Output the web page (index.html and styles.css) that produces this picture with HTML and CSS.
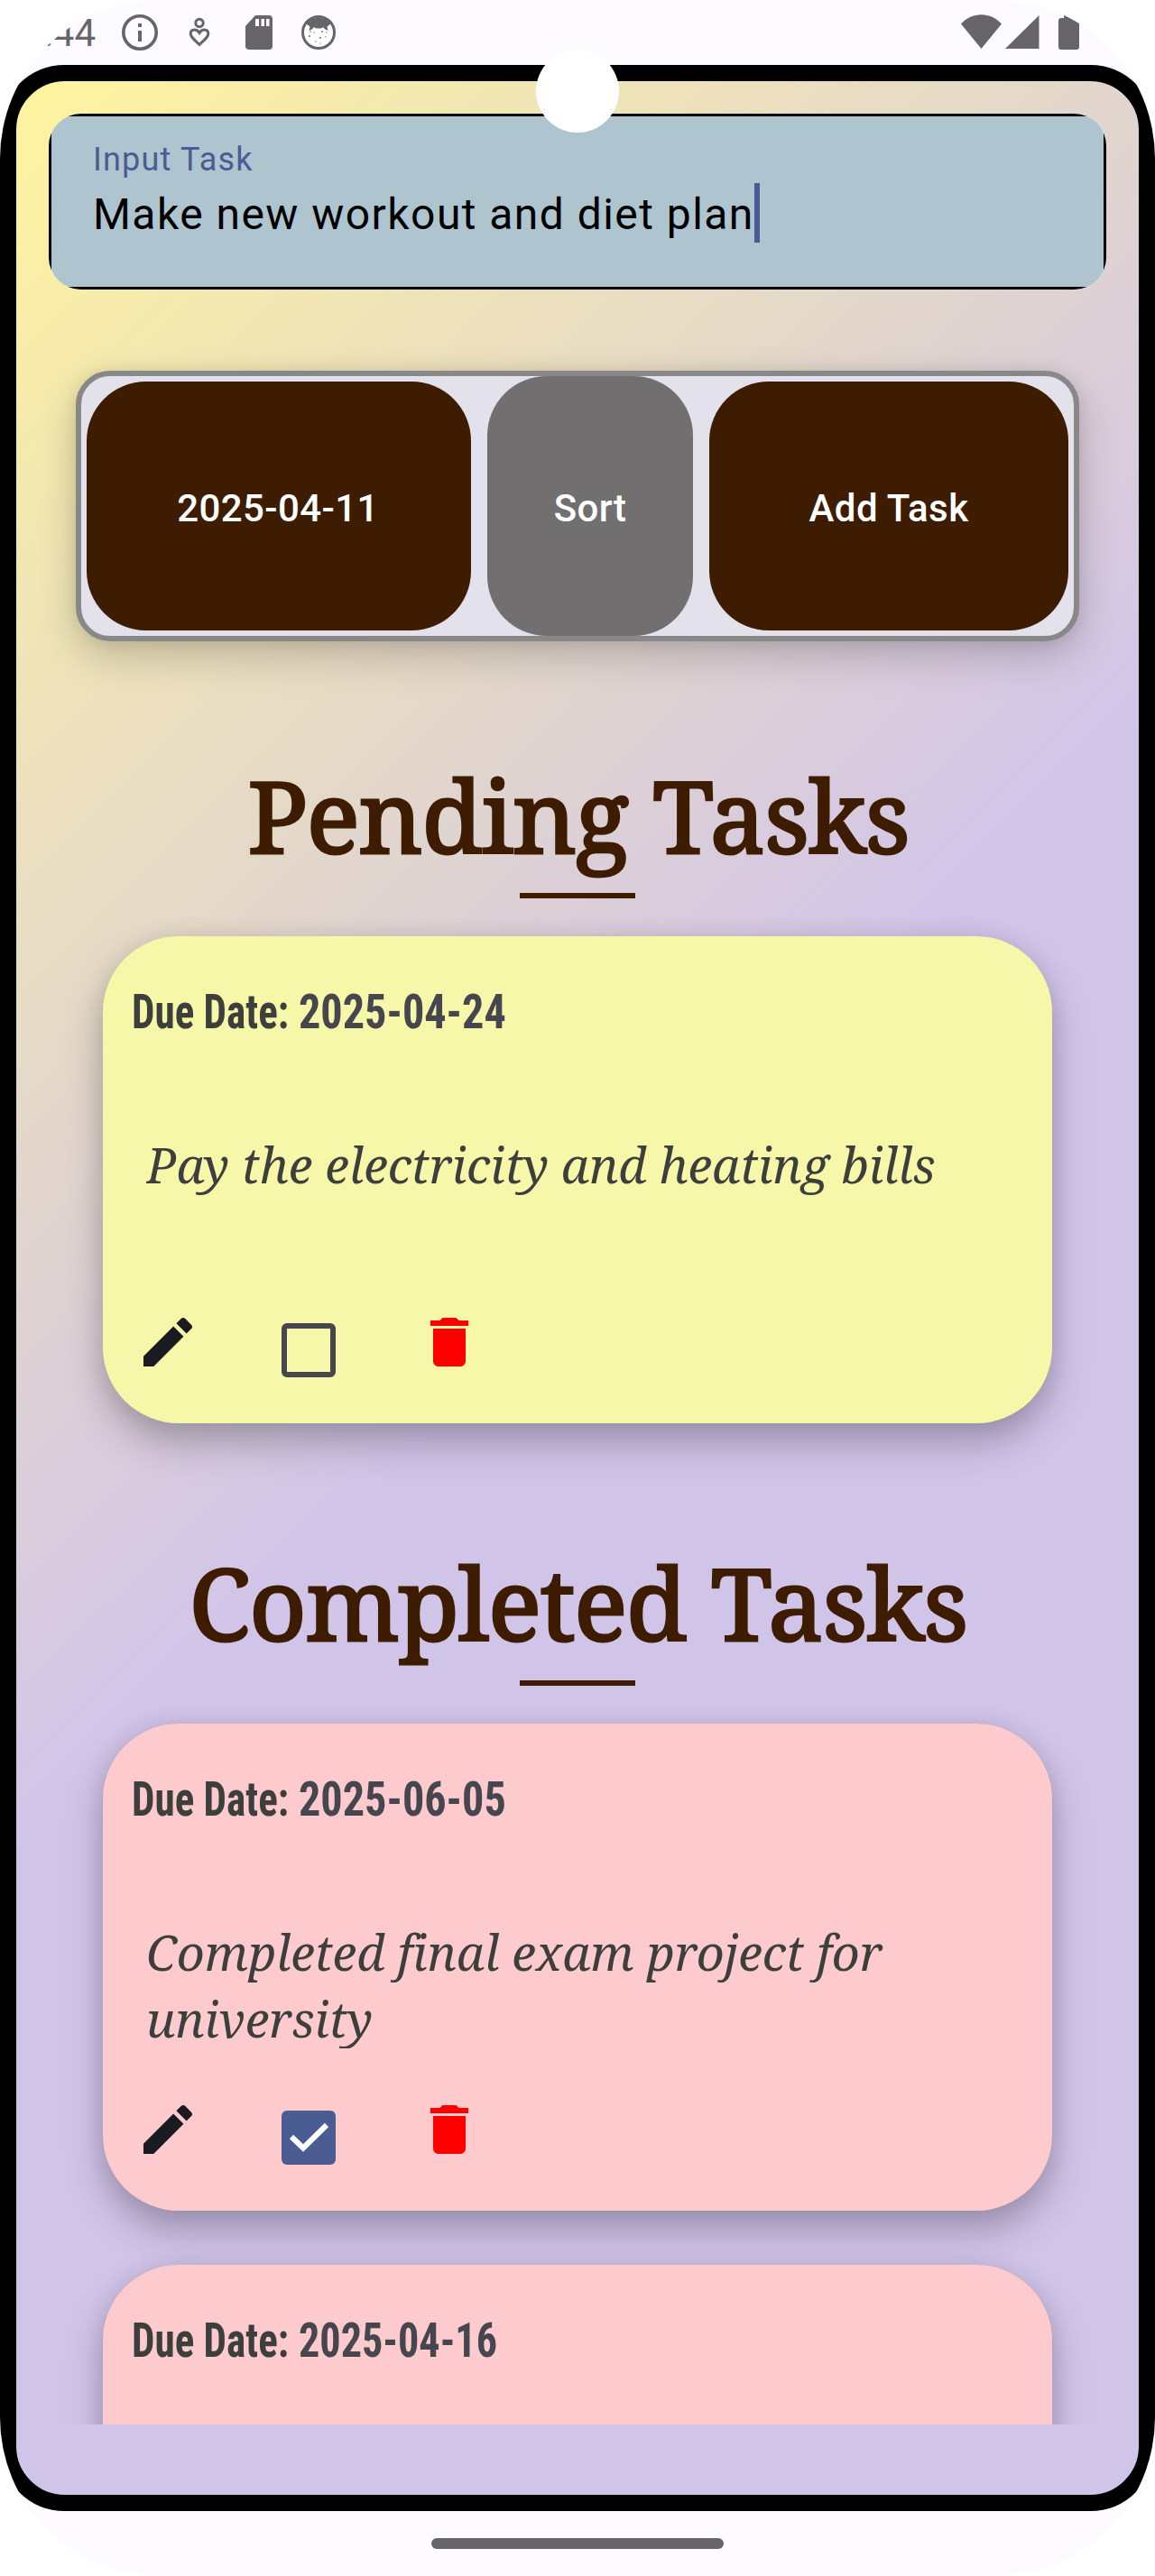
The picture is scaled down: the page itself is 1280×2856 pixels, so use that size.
FILE: index.html
```html
<!DOCTYPE html>
<html lang="en">
<head>
<meta charset="utf-8">
<title>Tasks</title>
<link rel="stylesheet" href="styles.css">
</head>
<body>
<svg class="sprite" aria-hidden="true">
  <symbol id="edit" viewBox="0 0 24 24"><path d="M3 17.25V21h3.75L17.81 9.94l-3.75-3.75L3 17.25zM20.71 7.04c.39-.39.39-1.02 0-1.41l-2.34-2.34c-.39-.39-1.02-.39-1.41 0l-1.83 1.83 3.75 3.75 1.83-1.83z"/></symbol>
  <symbol id="delete" viewBox="0 0 24 24"><path d="M6 19c0 1.1.9 2 2 2h8c1.1 0 2-.9 2-2V7H6v12zM19 4h-3.500l-1-1h-5l-1 1H5v2h14V4z"/></symbol>
</svg>
<div class="screen">
  <header class="status">
    <span class="clock">:44</span>
    <svg class="ic-info" viewBox="0 0 40 40"><circle cx="20" cy="20" r="18.200" fill="none" stroke="currentColor" stroke-width="3.600"/><path d="M18 10h4v4h-4zM18 18h4v12h-4z"/></svg>
    <svg class="ic-care" viewBox="0 0 24 34"><g fill="none" stroke="currentColor" stroke-width="3"><circle cx="12" cy="6.500" r="4.200"/><path d="M12 30.500C5 24 2.200 21.500 2.200 18.500c0-3 2-4.500 4.400-4.500 2.200 0 3.900 1 5.400 3.400 1.500-2.400 3.200-3.400 5.400-3.400 2.400 0 4.400 1.500 4.400 4.500 0 3-2.800 5.500-9.800 12z"/></g></svg>
    <svg class="ic-sd" viewBox="0 0 30 38"><path fill-rule="evenodd" d="M11 0h15a4 4 0 0 1 4 4v30a4 4 0 0 1-4 4H4a4 4 0 0 1-4-4V12zM11 4v8h4V4zM17.500 4v8h3.500V4zM23 4v8h3.500V4z"/></svg>
    <svg class="ic-face" viewBox="0 0 38 38"><circle cx="19" cy="19" r="17.500" fill="#fff" stroke="currentColor" stroke-width="3"/><path d="M5 9C10 1 28 1 33 9l-4.500 3.500 1 4.500-4-2-1-2c-3 2-8 2-11 0l-1 2-4 2 1-4.500z"/><g><circle cx="9" cy="23" r="1"/><circle cx="14" cy="19" r=".7"/><circle cx="21" cy="25" r="1"/><circle cx="27" cy="24" r=".7"/><circle cx="23" cy="18" r=".9"/><circle cx="16" cy="29" r=".7"/><circle cx="28" cy="19" r=".7"/><circle cx="10" cy="18" r=".8"/><circle cx="21" cy="31" r=".6"/></g></svg>
    <svg class="ic-net" viewBox="0 0 131 40"><path d="M0 10.500C12-3.300 33-3.300 45 10.500L22.500 38zM49 38 86.500 1v37zM108 7a3 3 0 0 1 3-3h3V1h10v3h4a3 3 0 0 1 3 3v29a3 3 0 0 1-3 3h-17a3 3 0 0 1-3-3z"/></svg>
  </header>
  <main class="app">
    <div class="field">
      <div class="field-inner">
        <label class="field-label">Input Task</label>
        <div class="field-value">Make new workout and diet plan<i class="caret"></i></div>
      </div>
    </div>
    <div class="actions">
      <button class="btn btn-date">2025-04-11</button>
      <button class="btn btn-sort">Sort</button>
      <button class="btn btn-add">Add Task</button>
    </div>
    <div class="lists">
      <h2 class="title">Pending Tasks</h2>
      <article class="card pending">
        <div class="due"><span class="due-label">Due Date:</span><span class="due-date">2025-04-24</span></div>
        <p class="desc">Pay the electricity and heating bills</p>
        <div class="tools"><svg class="edit"><use href="#edit"/></svg><span class="check"></span><svg class="delete"><use href="#delete"/></svg></div>
      </article>
      <h2 class="title">Completed Tasks</h2>
      <article class="card done">
        <div class="due"><span class="due-label">Due Date:</span><span class="due-date">2025-06-05</span></div>
        <p class="desc">Completed final exam project for university</p>
        <div class="tools"><svg class="edit"><use href="#edit"/></svg><span class="check checked"><svg viewBox="0 0 60 60"><path d="M11 29l13 12.500L50 16"/></svg></span><svg class="delete"><use href="#delete"/></svg></div>
      </article>
      <article class="card done">
        <div class="due"><span class="due-label">Due Date:</span><span class="due-date narrow">2025-04-16</span></div>
      </article>
    </div>
  </main>
  <footer class="nav"><span class="pill"></span></footer>
  <span class="camera"></span>
</div>
</body>
</html>
```
FILE: styles.css
```css
* { box-sizing: border-box; }
body { margin: 0; background: #fff; font-family: Roboto, sans-serif; }
.sprite { display: none; }
.screen {
  position: relative;
  width: 1280px;
  height: 2856px;
  border-radius: 176px;
  overflow: hidden;
  background: #fdfbff;
  display: flex;
  flex-direction: column;
}

/* system bar */
.status {
  height: 72px;
  flex: none;
  display: flex;
  align-items: flex-start;
  padding: 16px 84px 0 47px;
  color: #67646a;
}
.status svg { fill: currentColor; flex: none; }
.clock { width: 59px; margin-right: 29px; font-size: 42px; line-height: 42px; text-align: right; }
.ic-info { width: 40px; height: 40px; }
.ic-care { width: 24px; height: 34px; margin: 3px 0 0 34px; }
.ic-sd { width: 30px; height: 38px; margin: 1px 0 0 39px; }
.ic-face { width: 38px; height: 38px; margin: 1px 0 0 32px; }
.ic-net { width: 131px; height: 40px; margin-left: auto; }

.app {
  height: 2712px;
  flex: none;
  border: 18px solid #000;
  border-radius: 72px;
  padding: 36px 36px 78px;
  background: linear-gradient(135deg, #fff59d 0, #d1c4e9 1414px) border-box;
  display: flex;
  flex-direction: column;
}

/* text field */
.field { height: 195px; flex: none; border-radius: 36px; overflow: hidden; background: #aec5cf; }
.field-inner { height: 195px; border: 3px solid #000; padding: 24px 46px 0; }
.field-label { display: block; font-size: 36px; line-height: 48px; letter-spacing: 1.2px; color: #4a5c92; }
.field-value { display: flex; height: 66px; margin-top: 2px; font-size: 48px; line-height: 69px; letter-spacing: 1.45px; color: #000; white-space: nowrap; }
.caret { width: 6px; height: 66px; background: #4a5c92; }

/* buttons */
.actions {
  height: 300px;
  flex: none;
  margin: 90px 30px 0;
  padding: 0 6px;
  border: 6px solid #888;
  border-radius: 38px;
  background: #e2e1ec;
  display: flex;
  align-items: center;
  gap: 18px;
  box-shadow: 0 16px 44px rgba(0, 0, 0, .2), 0 0 16px rgba(0, 0, 0, .08);
}
.btn {
  height: 276px;
  padding: 5px 0 0;
  border: 0;
  border-radius: 66px;
  background: #3d1c02;
  color: #fff;
  font: 500 42px/60px Roboto, sans-serif;
  letter-spacing: .4px;
}
.btn-date { width: 426px; padding-right: 2px; }
.btn-sort { width: 228px; height: 288px; background: #716f70; }
.btn-add { width: 398px; }

/* scrolling lists */
.lists { flex: 1; margin: 0 -36px; padding: 0 96px; overflow: hidden; }
.title {
  position: relative;
  margin: 114px -60px 0;
  height: 213px;
  padding-left: 2px;
  font: 400 110px/156px "Noto Serif", "DejaVu Serif Condensed", serif;
  -webkit-text-stroke: 3px #3d1c02;
  letter-spacing: -1.1px;
  text-align: center;
  color: #3d1c02;
}
.card + .title { margin-top: 120px; }
.title::after {
  content: "";
  position: absolute;
  left: 50%;
  bottom: 42px;
  width: 128px;
  height: 6px;
  margin-left: -64px;
  background: #3d1c02;
}
.card {
  height: 540px;
  border-radius: 84px;
  padding: 48px 48px 0 32px;
  box-shadow: 0 22px 42px rgba(0, 0, 0, .25), 0 0 24px rgba(0, 0, 0, .08);
  color: #3c3f3c;
}
.card + .card { margin-top: 60px; }
.pending { background: #f7f7aa; }
.done { background: #fdcacd; }
.due { display: flex; height: 72px; font: 700 54px/72px "Roboto Condensed", Roboto, sans-serif; white-space: nowrap; }
.due span { transform-origin: 0 50%; }
.due-label { width: 185px; transform: scaleX(.835); }
.due-date { transform: scaleX(.893); color: #46464f; }
.due .narrow { transform: scaleX(.855); }
.desc {
  margin: 96px 0 0 16px;
  height: 144px;
  overflow: hidden;
  font: italic 54px/74px "Noto Serif", "DejaVu Serif Condensed", serif;
  letter-spacing: -.1px;
  font-variant-ligatures: common-ligatures;
}
.tools { display: flex; align-items: center; margin: 54px 0 0 4px; height: 72px; }
.tools > svg { width: 72px; height: 72px; }
.edit { fill: #1a1b21; }
.delete { fill: #f00; }
.check { width: 60px; height: 60px; margin: 18px 90px 0; border: 6px solid #46464f; border-radius: 6px; }
.checked { border: 0; background: #4a5c92; }
.checked svg { display: block; fill: none; stroke: #fff; stroke-width: 6; }

.nav { flex: 1; display: flex; justify-content: center; padding-top: 30px; }
.pill { width: 324px; height: 12px; border-radius: 6px; background: #67646a; }
.camera { position: absolute; left: 594px; top: 55px; width: 92px; height: 92px; border-radius: 50%; background: #fff; }
```
